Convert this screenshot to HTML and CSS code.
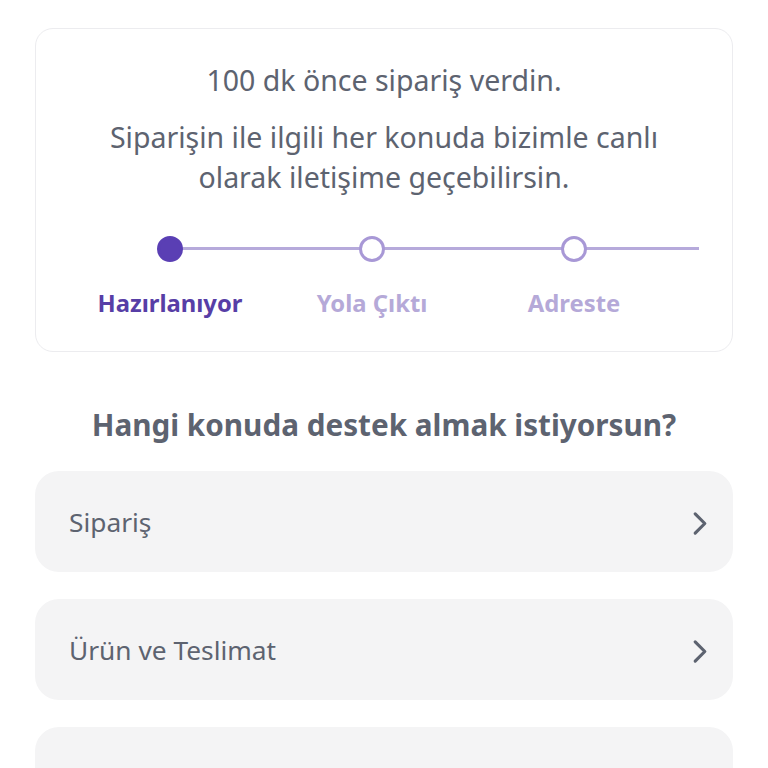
FILE: index.html
```
<!DOCTYPE html>
<html lang="tr">
<head>
<meta charset="utf-8">
<link rel="stylesheet" href="styles.css">
</head>
<body>
<div class="page">
  <section class="card">
    <p class="lead">100 dk önce sipariş verdin.</p>
    <p class="desc">Siparişin ile ilgili her konuda bizimle canlı olarak iletişime geçebilirsin.</p>
    <div class="stepper">
      <div class="step active">
        <span class="dot"></span>
        <span class="label">Hazırlanıyor</span>
      </div>
      <div class="step">
        <span class="dot"></span>
        <span class="label">Yola Çıktı</span>
      </div>
      <div class="step">
        <span class="dot"></span>
        <span class="label">Adreste</span>
      </div>
    </div>
  </section>

  <h2 class="heading">Hangi konuda destek almak istiyorsun?</h2>

  <ul class="topics">
    <li class="topic"><span>Sipariş</span><svg class="chev" viewBox="0 0 16 26"><path d="M3 3 L13 13 L3 23"/></svg></li>
    <li class="topic"><span>Ürün ve Teslimat</span><svg class="chev" viewBox="0 0 16 26"><path d="M3 3 L13 13 L3 23"/></svg></li>
    <li class="topic"><span>Diğer</span><svg class="chev" viewBox="0 0 16 26"><path d="M3 3 L13 13 L3 23"/></svg></li>
  </ul>
</div>
</body>
</html>
```
FILE: styles.css
```
html, body {
  margin: 0;
  padding: 0;
  background: #ffffff;
}
body {
  font-family: "Noto Sans", "Open Sans", sans-serif;
  color: #5d6370;
  overflow: hidden;
  height: 768px;
}
.page {
  padding: 28px 35px 0;
}
.card {
  border: 1px solid #ececef;
  border-radius: 18px;
  padding: 32px 33px 32px;
  text-align: center;
}
.lead {
  margin: 0;
  font-size: 28.5px;
  line-height: 38px;
}
.desc {
  margin: 18px 20px 0;
  font-size: 28.5px;
  line-height: 40px;
}
.stepper {
  position: relative;
  display: flex;
  margin-top: 39px;
}
.stepper::before {
  content: "";
  position: absolute;
  left: 101px;
  right: 0;
  top: 11px;
  height: 3px;
  background: #b6aadb;
}
.step {
  position: relative;
  width: 202px;
  display: flex;
  flex-direction: column;
  align-items: center;
}
.dot {
  width: 20px;
  height: 20px;
  border: 3px solid #a898d6;
  border-radius: 50%;
  background: #fff;
}
.step.active .dot {
  background: #5a3fb4;
  border-color: #5a3fb4;
}
.label {
  margin-top: 25px;
  font-size: 23.8px;
  line-height: 32px;
  font-weight: 700;
  color: #b5a9d8;
}
.step.active .label {
  color: #573ea6;
}
.heading {
  margin: 54px 0 0;
  text-align: center;
  font-size: 29.7px;
  line-height: 38px;
  font-weight: 700;
}
.topics {
  list-style: none;
  margin: 27px 0 0;
  padding: 0;
  display: flex;
  flex-direction: column;
  gap: 27px;
}
.topic {
  height: 101px;
  background: #f4f4f5;
  border-radius: 24px;
  display: flex;
  align-items: center;
  justify-content: space-between;
  padding: 0 25px 0 34px;
  font-size: 26.3px;
}
.chev {
  width: 16px;
  height: 25px;
  margin-top: 3px;
  fill: none;
  stroke: #5d6370;
  stroke-width: 3.3;
  stroke-linecap: round;
  stroke-linejoin: round;
}
```
